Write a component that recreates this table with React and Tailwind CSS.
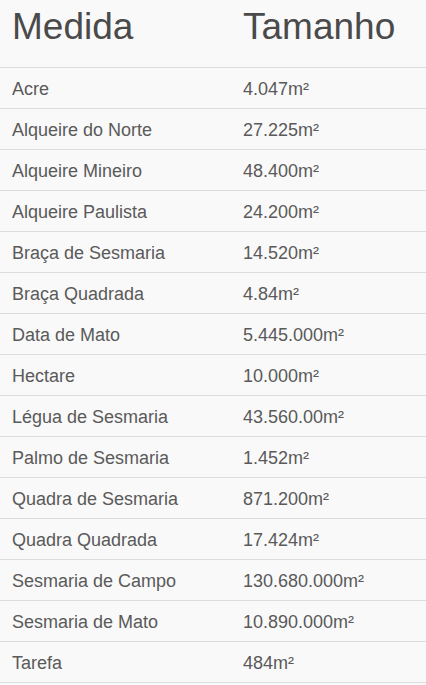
export default function App() {
  const rows = [
    ["Acre", "4.047m²"],
    ["Alqueire do Norte", "27.225m²"],
    ["Alqueire Mineiro", "48.400m²"],
    ["Alqueire Paulista", "24.200m²"],
    ["Braça de Sesmaria", "14.520m²"],
    ["Braça Quadrada", "4.84m²"],
    ["Data de Mato", "5.445.000m²"],
    ["Hectare", "10.000m²"],
    ["Légua de Sesmaria", "43.560.00m²"],
    ["Palmo de Sesmaria", "1.452m²"],
    ["Quadra de Sesmaria", "871.200m²"],
    ["Quadra Quadrada", "17.424m²"],
    ["Sesmaria de Campo", "130.680.000m²"],
    ["Sesmaria de Mato", "10.890.000m²"],
    ["Tarefa", "484m²"],
  ];
  return (
    <div
      className="w-[426px] h-[685px] overflow-hidden bg-[#f9f9f9] text-[#5a5a5a]"
      style={{ fontFamily: '"Liberation Sans", Arial, sans-serif' }}
    >
      <div className="flex h-[68px] border-b border-[#dddddd]">
        <div className="w-[231px] pl-3 pt-2 text-[37px] leading-[37px] text-[#4a4a4a]">Medida</div>
        <div className="flex-1 pl-3 pt-2 text-[37px] leading-[37px] text-[#4a4a4a]">Tamanho</div>
      </div>
      {rows.map(([a, b]) => (
        <div key={a} className="flex h-[41px] items-center border-b border-[#dddddd] pt-[3px] text-[18px]">
          <div className="w-[231px] pl-3">{a}</div>
          <div className="flex-1 pl-3">{b}</div>
        </div>
      ))}
    </div>
  );
}
